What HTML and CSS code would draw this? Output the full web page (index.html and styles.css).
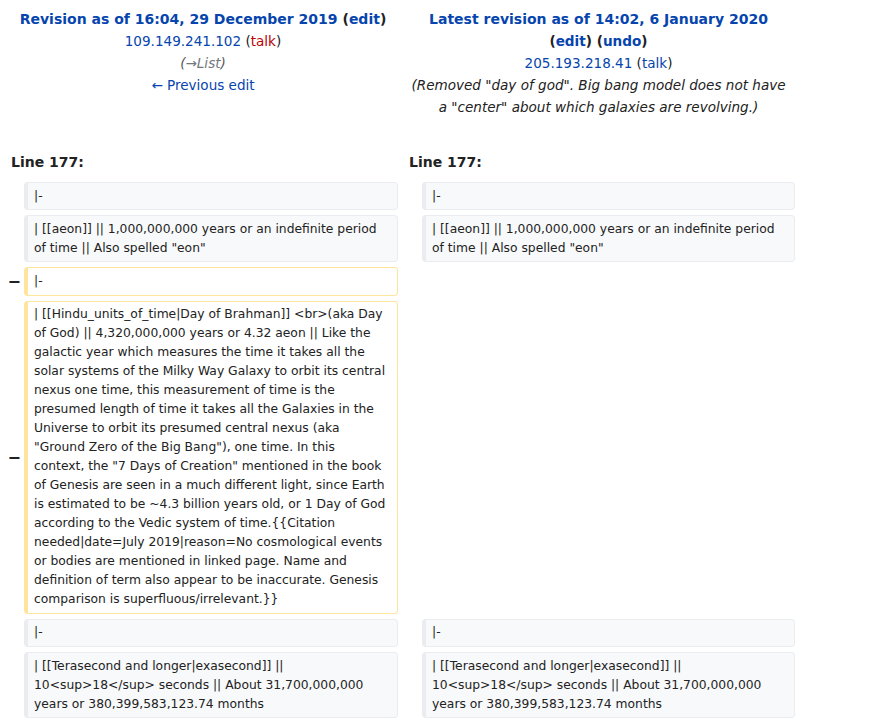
FILE: index.html
```html
<!DOCTYPE html>
<html lang="en">
<head>
<meta charset="utf-8">
<title>Diff</title>
<link rel="stylesheet" href="styles.css">
</head>
<body>
<div class="diff">
  <div class="title title-old">
    <div class="strong"><a class="link">Revision as of 16:04, 29 December 2019</a> <span class="paren">(<a class="link">edit</a>)</span></div>
    <div class="plain"><a class="link">109.149.241.102</a> <span class="paren">(<a class="link red">talk</a>)</span></div>
    <div class="plain comment">(<span class="auto">→List</span>)</div>
    <div class="plain"><a class="link">← Previous edit</a></div>
  </div>
  <div class="title title-new">
    <div class="strong"><a class="link">Latest revision as of 14:02, 6 January 2020</a></div>
    <div class="strong small"><span class="paren">(<a class="link">edit</a>)</span> <span class="paren">(<a class="link">undo</a>)</span></div>
    <div class="plain"><a class="link">205.193.218.41</a> <span class="paren">(<a class="link">talk</a>)</span></div>
    <div class="plain summary">(Removed "day of god". Big bang model does not have a "center" about which galaxies are revolving.)</div>
  </div>

  <div class="lineno lineno-old">Line 177:</div>
  <div class="lineno lineno-new">Line 177:</div>

  <div class="marker"></div>
  <div class="line context">|-</div>
  <div class="marker"></div>
  <div class="line context">|-</div>

  <div class="marker"></div>
  <div class="line context">| [[aeon]] || 1,000,000,000 years or an indefinite period of time || Also spelled "eon"</div>
  <div class="marker"></div>
  <div class="line context">| [[aeon]] || 1,000,000,000 years or an indefinite period of time || Also spelled "eon"</div>

  <div class="marker minus">−</div>
  <div class="line deleted">|-</div>
  <div class="marker"></div>
  <div class="empty"></div>

  <div class="marker minus">−</div>
  <div class="line deleted">| [[Hindu_units_of_time|Day of Brahman]] &lt;br&gt;(aka Day of God) || 4,320,000,000 years or 4.32 aeon || Like the galactic year which measures the time it takes all the solar systems of the Milky Way Galaxy to orbit its central nexus one time, this measurement of time is the presumed length of time it takes all the Galaxies in the Universe to orbit its presumed central nexus (aka "Ground Zero of the Big Bang"), one time. In this context, the "7 Days of Creation" mentioned in the book of Genesis are seen in a much different light, since Earth is estimated to be ~4.3 billion years old, or 1 Day of God according to the Vedic system of time.{{Citation needed|date=July 2019|reason=No cosmological events or bodies are mentioned in linked page. Name and definition of term also appear to be inaccurate. Genesis comparison is superfluous/irrelevant.}}</div>
  <div class="marker"></div>
  <div class="empty"></div>

  <div class="marker"></div>
  <div class="line context">|-</div>
  <div class="marker"></div>
  <div class="line context">|-</div>

  <div class="marker"></div>
  <div class="line context">| [[Terasecond and longer|exasecond]] || 10&lt;sup&gt;18&lt;/sup&gt; seconds || About 31,700,000,000 years or 380,399,583,123.74 months</div>
  <div class="marker"></div>
  <div class="line context">| [[Terasecond and longer|exasecond]] || 10&lt;sup&gt;18&lt;/sup&gt; seconds || About 31,700,000,000 years or 380,399,583,123.74 months</div>
</div>
</body>
</html>
```

FILE: styles.css
```css
html, body {
  margin: 0;
  padding: 0;
  background: #ffffff;
}

body {
  padding: 8px;
  font-family: "DejaVu Sans", sans-serif;
  font-size: 14px;
  line-height: 22px;
  color: #222222;
}

.diff {
  display: grid;
  grid-template-columns: 12px 374px 16px 373px;
  column-gap: 4px;
  row-gap: 5px;
  align-items: stretch;
}

.title {
  grid-column: span 2;
  text-align: center;
  padding: 0 7px;
}

.strong {
  font-weight: bold;
}

.strong.small {
  font-size: 13.6px;
}

.plain {
  font-size: 13.55px;
}

.link {
  color: #0645ad;
  text-decoration: none;
}

.link.red {
  color: #ba0000;
}

.paren {
  color: #222222;
}

.comment {
  font-style: italic;
  color: #54595d;
}

.comment .auto {
  color: #72777d;
}

.summary {
  font-style: italic;
  color: #222222;
}

.lineno {
  grid-column: span 2;
  font-weight: bold;
  margin-top: 28px;
  margin-bottom: 4px;
  padding-left: 3px;
}

.lineno-new {
  padding-left: 7px;
}

.marker {
  display: flex;
  align-items: center;
  justify-content: flex-end;
  font-weight: bold;
  font-size: 16px;
  line-height: 19px;
}

.minus {
  margin-right: -1px;
}

.line {
  font-size: 12.32px;
  line-height: 19px;
  padding: 3.6px 8.5px 3.6px 6px;
  white-space: pre-wrap;
  overflow-wrap: break-word;
  border-style: solid;
  border-width: 1px 1px 1px 4px;
  border-radius: 4px;
  color: #222222;
}

.context {
  background: #f8f9fa;
  border-color: #eaecf0;
}

.deleted {
  background: #ffffff;
  border-color: #ffe49c;
}

.empty {
  min-height: 1px;
}
```
